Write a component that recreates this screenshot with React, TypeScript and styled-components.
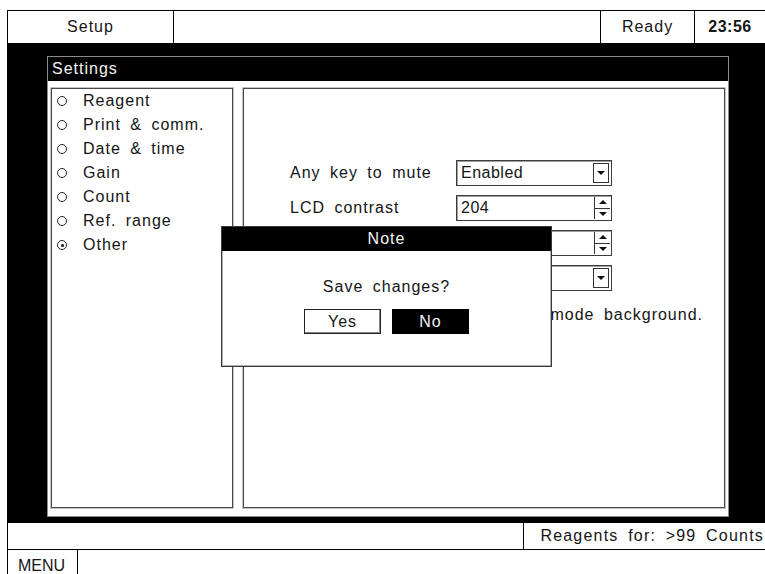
import styled, {createGlobalStyle} from 'styled-components';

const GlobalStyle = createGlobalStyle`
  html, body {
    margin: 0;
    padding: 0;
    background: #fff;
  }
  body {
    font-family: "Liberation Sans", Arial, sans-serif;
  }
`;

const Screen = styled.div`
  position: relative;
  margin: 10px 0 0 7px;
  width: 758px;
  height: 564px;
  display: flex;
  flex-direction: column;
  font-family: "Liberation Sans", Arial, sans-serif;
  font-size: 16px;
  letter-spacing: 1px;
  word-spacing: 4px;
  color: #151515;
`;

const TopBar = styled.div`
  display: grid;
  grid-template-columns: 166px 427px 94px 71px;
  height: 33px;
  box-sizing: border-box;
  border-top: 1px solid #000;
  border-left: 1px solid #000;
  background: #fff;
`;

const BarCell = styled.div<{$bold?: boolean}>`
  display: flex;
  align-items: center;
  justify-content: center;
  border-right: 1px solid #000;
  font-weight: ${(p) => (p.$bold ? 700 : 400)};
  letter-spacing: ${(p) => (p.$bold ? '0.5px' : '1px')};
`;

const Main = styled.div`
  flex: 1;
  display: flex;
  background: #000;
  padding: 13px 36px 6px 40px;
`;

const Window = styled.div`
  flex: 1;
  display: flex;
  flex-direction: column;
  background: #fff;
  border: 1px solid #8a8a8a;
`;

const TitleBar = styled.div<{$center?: boolean}>`
  height: 24px;
  flex: none;
  display: flex;
  align-items: center;
  justify-content: ${(p) => (p.$center ? 'center' : 'flex-start')};
  padding-left: ${(p) => (p.$center ? '0' : '4px')};
  background: #000;
  color: #f4f4f4;
`;

const WindowBody = styled.div`
  flex: 1;
  display: flex;
  gap: 10px;
  padding: 7px 3px 8px 3px;
`;

const Panel = styled.div<{$width?: number}>`
  ${(p) => (p.$width ? `width: ${p.$width}px; flex: none;` : 'flex: 1;')}
  border: 1px solid #4a4a4a;
  box-shadow: 0 0 0 1px #c4c4c4;
`;

const List = styled.div`
  display: flex;
  flex-direction: column;
`;

const ListItem = styled.div`
  height: 24px;
  display: flex;
  align-items: center;
  padding-left: 5px;
`;

const Radio = styled.span<{$checked?: boolean}>`
  position: relative;
  width: 10px;
  height: 10px;
  box-sizing: border-box;
  border: 1px solid #222;
  border-radius: 50%;
  margin-right: 16px;
  flex: none;
  &::after {
    content: '';
    display: ${(p) => (p.$checked ? 'block' : 'none')};
    position: absolute;
    left: 2.5px;
    top: 2.5px;
    width: 3px;
    height: 3px;
    border-radius: 50%;
    background: #111;
  }
`;

const Form = styled.div`
  padding: 71px 21px 0 46px;
  display: flex;
  flex-direction: column;
`;

const FieldGrid = styled.div`
  display: grid;
  grid-template-columns: 166px 156px;
  grid-auto-rows: 26px;
  row-gap: 9px;
  align-items: center;
`;

const FieldBox = styled.div`
  height: 26px;
  box-sizing: border-box;
  display: flex;
  align-items: stretch;
  border: 1px solid #3c3c3c;
  box-shadow: inset 1px 1px 0 #a0a0a0;
`;

const FieldValue = styled.div`
  flex: 1;
  display: flex;
  align-items: center;
  padding-left: 4px;
  letter-spacing: 0.5px;
`;

const DropButton = styled.div`
  width: 14px;
  margin: 2px 2px 2px 0;
  border: 1px solid #333;
  display: flex;
  align-items: center;
  justify-content: center;
`;

const Spin = styled.div`
  width: 15px;
  margin: 1px 1px 1px 0;
  display: flex;
  flex-direction: column;
  border-left: 1px solid #333;
`;

const SpinHalf = styled.div<{$bottom?: boolean}>`
  flex: 1;
  display: flex;
  align-items: center;
  justify-content: center;
  border-top: ${(p) => (p.$bottom ? '1px solid #333' : 'none')};
`;

const Arrow = styled.span<{$up?: boolean}>`
  width: 0;
  height: 0;
  border-left: 4px solid transparent;
  border-right: 4px solid transparent;
  ${(p) =>
    p.$up ? 'border-bottom: 4px solid #111;' : 'border-top: 4px solid #111;'}
`;

const Hint = styled.div`
  margin-top: 14px;
  line-height: 20px;
  text-align: right;
  white-space: nowrap;
`;

const StatusBar = styled.div`
  display: grid;
  grid-template-columns: 515px 243px;
  height: 27px;
  box-sizing: border-box;
  border-left: 1px solid #000;
  border-bottom: 1px solid #000;
  background: #fff;
`;

const StatusCell = styled.div`
  display: flex;
  align-items: center;
  justify-content: flex-end;
  padding-right: 2px;
  letter-spacing: 1.2px;
  & + & {
    border-left: 1px solid #000;
  }
`;

const MenuBar = styled.div`
  height: 24px;
  display: flex;
  border-left: 1px solid #000;
  background: #fff;
`;

const MenuCell = styled.div`
  width: 70px;
  border-right: 1px solid #000;
  padding: 8px 0 0 10px;
  box-sizing: border-box;
  letter-spacing: 0;
  line-height: 16px;
`;

const Dialog = styled.div`
  position: absolute;
  left: 214px;
  top: 216px;
  width: 331px;
  height: 141px;
  box-sizing: border-box;
  display: flex;
  flex-direction: column;
  background: #fff;
  border: 1px solid #3a3a3a;
  box-shadow: inset 0 0 0 1px #b0b0b0;
`;

const DialogBody = styled.div`
  display: flex;
  flex-direction: column;
  align-items: center;
  padding-top: 26px;
`;

const Message = styled.div`
  line-height: 20px;
`;

const ButtonRow = styled.div`
  display: flex;
  gap: 11px;
  margin-top: 12px;
`;

const DialogButton = styled.div<{$active?: boolean}>`
  width: 77px;
  height: 25px;
  box-sizing: border-box;
  display: flex;
  align-items: center;
  justify-content: center;
  background: ${(p) => (p.$active ? '#000' : '#fff')};
  color: ${(p) => (p.$active ? '#f4f4f4' : '#151515')};
  border: 1px solid ${(p) => (p.$active ? '#000' : '#222')};
  box-shadow: ${(p) => (p.$active ? 'none' : 'inset -1px -1px 0 #888')};
`;

const menuItems = [
  'Reagent',
  'Print & comm.',
  'Date & time',
  'Gain',
  'Count',
  'Ref. range',
  'Other',
];

const Dropdown = ({value}: {value: string}) => (
  <FieldBox>
    <FieldValue>{value}</FieldValue>
    <DropButton>
      <Arrow />
    </DropButton>
  </FieldBox>
);

const Spinner = ({value}: {value: string}) => (
  <FieldBox>
    <FieldValue>{value}</FieldValue>
    <Spin>
      <SpinHalf>
        <Arrow $up />
      </SpinHalf>
      <SpinHalf $bottom>
        <Arrow />
      </SpinHalf>
    </Spin>
  </FieldBox>
);

export default function App() {
  return (
    <>
      <GlobalStyle />
      <Screen>
        <TopBar>
          <BarCell>Setup</BarCell>
          <BarCell />
          <BarCell>Ready</BarCell>
          <BarCell $bold>23:56</BarCell>
        </TopBar>

        <Main>
          <Window>
            <TitleBar>Settings</TitleBar>
            <WindowBody>
              <Panel $width={180}>
                <List>
                  {menuItems.map((item) => (
                    <ListItem key={item}>
                      <Radio $checked={item === 'Other'} />
                      {item}
                    </ListItem>
                  ))}
                </List>
              </Panel>
              <Panel>
                <Form>
                  {/* rows 3 and 4 sit under the Note dialog; their labels are covered */}
                  <FieldGrid>
                    <span>Any key to mute</span>
                    <Dropdown value="Enabled" />
                    <span>LCD contrast</span>
                    <Spinner value="204" />
                    <span />
                    <Spinner value="" />
                    <span />
                    <Dropdown value="" />
                  </FieldGrid>
                  <Hint>mode background.</Hint>
                </Form>
              </Panel>
            </WindowBody>
          </Window>
        </Main>

        <StatusBar>
          <StatusCell />
          <StatusCell>Reagents for: &gt;99 Counts</StatusCell>
        </StatusBar>

        <MenuBar>
          <MenuCell>MENU</MenuCell>
        </MenuBar>

        <Dialog>
          <TitleBar $center>Note</TitleBar>
          <DialogBody>
            <Message>Save changes?</Message>
            <ButtonRow>
              <DialogButton>Yes</DialogButton>
              <DialogButton $active>No</DialogButton>
            </ButtonRow>
          </DialogBody>
        </Dialog>
      </Screen>
    </>
  );
}
